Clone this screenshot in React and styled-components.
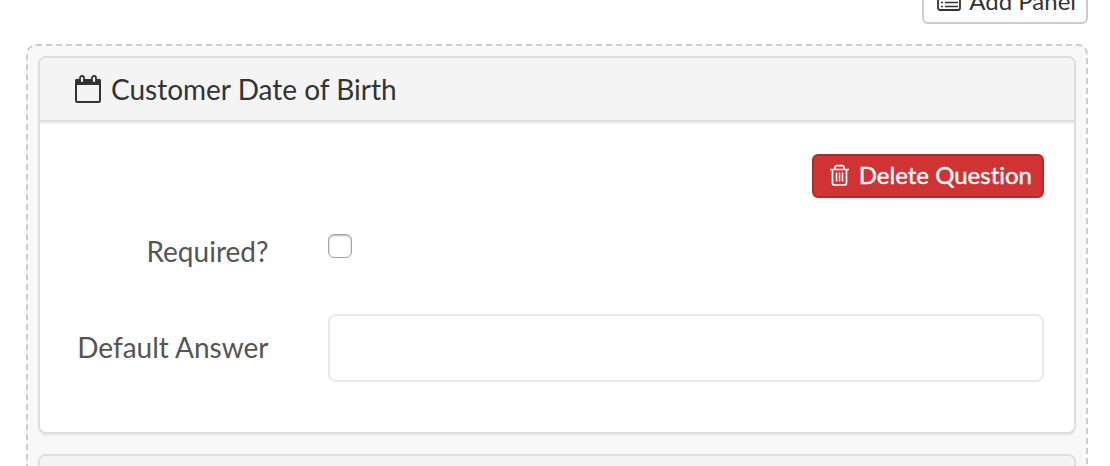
import { useState } from 'react';
import styled, { createGlobalStyle } from 'styled-components';

const GlobalStyle = createGlobalStyle`
  * {
    box-sizing: border-box;
  }
  body {
    margin: 0;
    height: 100vh;
    overflow: hidden;
    background: #fff;
    color: #333;
    font-family: Lato, "Liberation Sans", sans-serif;
    font-size: 28px;
    font-variant-ligatures: none;
    line-height: 40px;
  }
`

const Page = styled.main`
  padding: 0 22px 0 26px;
`

// scrolled partly out of view
const Toolbar = styled.div`
  display: flex;
  justify-content: flex-end;
  margin-top: -20px;
  margin-bottom: 20px;
`

const Button = styled.button`
  display: flex;
  align-items: center;
  gap: ${props => props.$danger ? '10px' : '8px'};
  height: 44px;
  padding: ${props => props.$danger ? '0 10px 2px 16px' : '0 10px 2px 13px'};
  border: 2px solid ${props => props.$danger ? '#ac2d2d' : '#ccc'};
  border-radius: 6px;
  background: ${props => props.$danger ? '#d03333' : '#fff'};
  color: ${props => props.$danger ? '#fff' : '#333'};
  font-family: inherit;
  font-size: 24px;
  font-variant-ligatures: none;
  line-height: 36px;
  white-space: nowrap;
  -webkit-text-stroke: ${props => props.$danger ? '0.4px #fff' : '0'};
`

const Builder = styled.section`
  display: flex;
  flex-direction: column;
  gap: 20px;
  padding: 10px;
  border: 2px dashed #ccc;
  border-radius: 10px;
  background: #f8f8f8;
`

const Panel = styled.article`
  border: 2px solid #ddd;
  border-radius: 8px;
  background: #fff;
  box-shadow: 0 2px 2px rgba(0, 0, 0, 0.05);
`

const PanelHeader = styled.header`
  display: flex;
  align-items: center;
  gap: 10px;
  height: 64px;
  padding: 0 34px;
  border-bottom: 2px solid #ddd;
  border-radius: 6px 6px 0 0;
  background: #f4f4f4;
`

const PanelTitle = styled.h3`
  margin: 0;
  font-size: 28px;
  font-weight: 400;
`

const PanelBody = styled.div`
  padding: 30px 0 50px;
  border-top: 2px solid #edf1f2;
`

const Actions = styled.div`
  display: flex;
  justify-content: flex-end;
  padding: 0 30px;
  margin-bottom: 33px;
`

const FormRow = styled.div`
  display: grid;
  grid-template-columns: 1fr 3fr;
  align-items: ${props => props.$top ? 'start' : 'center'};
  margin-bottom: ${props => props.$top ? '41px' : '0'};
`

const Label = styled.label`
  padding: 0 30px 2px;
  color: #555;
  text-align: right;
  white-space: nowrap;
`

const Field = styled.div`
  display: flex;
  padding: 0 30px 0 29px;
`

const Checkbox = styled.input`
  appearance: none;
  width: 24px;
  height: 24px;
  margin: 3px 0 0;
  border: 1px solid #a3a3a3;
  border-radius: 6px;
  background: #fff;
  box-shadow: inset 0 1px 2px rgba(0, 0, 0, 0.3);
  &:checked {
    background: #555;
  }
`

const TextInput = styled.input`
  width: 100%;
  height: 68px;
  padding: 12px 24px;
  border: 2px solid #e6e9ee;
  border-radius: 8px;
  background: #fff;
  color: #555;
  font: inherit;
  outline: none;
`

const Icon = styled.svg`
  flex: none;
  fill: none;
  stroke: currentColor;
`

function CalendarIcon() {
  return (
    <Icon width="27" height="28" viewBox="0 0 27 28" strokeWidth="2">
      <rect x="2" y="5" width="24" height="22" rx="1.5" />
      <path d="M1 5.5q0-1.5 1.5-1.5h23q1.500 0 1.500 1.500V10H1z" fill="currentColor" stroke="none" />
      <rect x="6" y="1" width="4" height="7" rx="2" fill="#f4f4f4" strokeWidth="1.8" />
      <rect x="18" y="1" width="4" height="7" rx="2" fill="#f4f4f4" strokeWidth="1.8" />
    </Icon>
  )
}

function TrashIcon() {
  return (
    <Icon width="19" height="22" viewBox="0 0 19 22" strokeWidth="1.7">
      <path d="M0 5.500h19M5 5V3.500q0-1.800 2-1.800h5q2 0 2 1.800V5M2.500 5.500v13.500q0 2 2 2h10q2 0 2-2V5.500" />
      <path d="M6.500 8.500v9M9.500 8.500v9M12.500 8.500v9" strokeWidth="1.500" />
    </Icon>
  )
}

function ListIcon() {
  return (
    <Icon width="24" height="20" viewBox="0 0 24 20" strokeWidth="1.800">
      <rect x="1" y="1" width="22" height="18" rx="2" />
      <path d="M1 3h22" strokeWidth="3" />
      <path d="M4 7.500h2M8 7.500h13M4 11.500h2M8 11.500h13M4 15.500h2M8 15.500h13" strokeWidth="1.600" />
    </Icon>
  )
}

function App() {
  const [required, setRequired] = useState(false)
  const [answer, setAnswer] = useState('')

  return (
    <Page>
      <GlobalStyle />
      <Toolbar>
        <Button type="button"><ListIcon />Add Panel</Button>
      </Toolbar>
      <Builder>
        <Panel>
          <PanelHeader>
            <CalendarIcon />
            <PanelTitle>Customer Date of Birth</PanelTitle>
          </PanelHeader>
          <PanelBody>
            <Actions>
              <Button type="button" $danger><TrashIcon />Delete Question</Button>
            </Actions>
            <FormRow $top>
              <Label htmlFor="required">Required?</Label>
              <Field>
                <Checkbox
                  id="required"
                  type="checkbox"
                  checked={required}
                  onChange={e => setRequired(e.target.checked)}
                />
              </Field>
            </FormRow>
            <FormRow>
              <Label htmlFor="answer">Default Answer</Label>
              <Field>
                <TextInput
                  id="answer"
                  type="text"
                  value={answer}
                  onChange={e => setAnswer(e.target.value)}
                />
              </Field>
            </FormRow>
          </PanelBody>
        </Panel>
        <Panel>
          <PanelHeader />
        </Panel>
      </Builder>
    </Page>
  )
}
export default App;
